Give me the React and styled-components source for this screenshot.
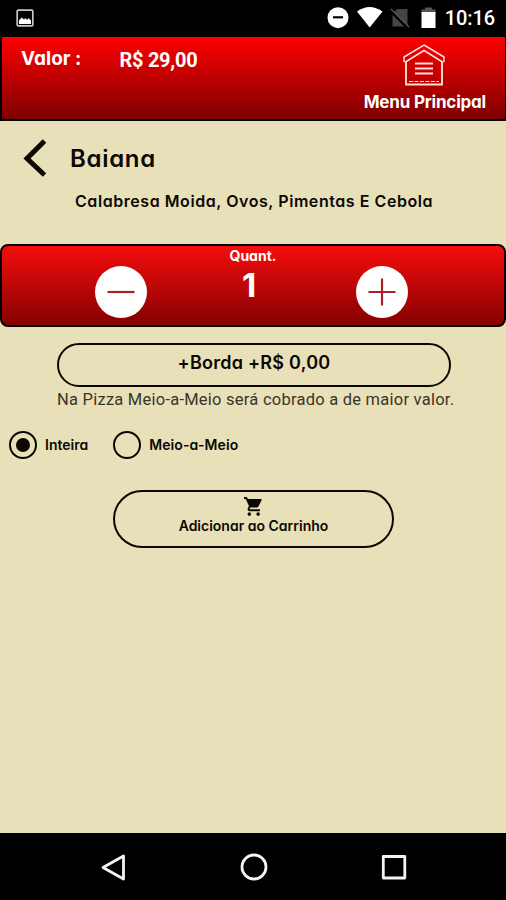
import React, { useState } from "react";
import styled, { createGlobalStyle } from "styled-components";

const GlobalStyle = createGlobalStyle`
  * { box-sizing: border-box; }
  body { margin: 0; background: #000; }
  button { border: 0; padding: 0; margin: 0; background: none; color: inherit; font: inherit; cursor: pointer; }
  svg { display: block; }
`;

const Screen = styled.div`
  display: flex;
  flex-direction: column;
  width: 506px;
  height: 900px;
  overflow: hidden;
  background: #e8e0b9;
  color: #0b0803;
`;

const Label = styled.span`
  display: block;
  white-space: pre;
  font-family: ${(p) => (p.$plain ? "Roboto" : "Inter")}, sans-serif;
  font-feature-settings: ${(p) => (p.$plain ? "normal" : '"cv11" 1')};
  font-size: ${(p) => p.$size}px;
  line-height: ${(p) => p.$line || 20}px;
  font-weight: ${(p) => p.$weight || 600};
  letter-spacing: ${(p) => p.$track || 0}px;
`;

const StatusBar = styled.div`
  display: flex;
  align-items: center;
  flex: 0 0 36px;
  padding: 0 11px 0 16px;
  background: #000;
  color: #fff;
`;

const StatusIcons = styled.div`
  display: flex;
  align-items: center;
  margin-left: auto;
  margin-right: 9px;
`;

const Header = styled.header`
  display: flex;
  justify-content: space-between;
  flex: 0 0 85px;
  padding: 11px 19px 0 19px;
  border: solid #000;
  border-width: 1px 1px 2px 2px;
  background: linear-gradient(#ff0000, #7d0000);
  color: #fff;
`;

const Total = styled.div`
  display: flex;
  gap: 38px;
  padding-top: 1px;
`;

const Amount = styled.div`
  margin-top: -1px;
`;

const MenuButton = styled.button`
  display: flex;
  flex-direction: column;
  align-items: center;
  align-self: flex-start;
  margin-top: -5px;
  gap: 6px;
`;

const TitleRow = styled.div`
  display: flex;
  align-items: center;
  height: 46px;
  margin-top: 14px;
  padding-left: 23px;
  gap: 23px;
`;

const Title = styled.h1`
  margin: 2px 0 0;
`;

const Ingredients = styled.div`
  display: flex;
  height: 63px;
  padding: 10px 0 0 75px;
`;

const QuantityBar = styled.section`
  display: grid;
  grid-template-columns: 1fr 90px 1fr;
  flex: 0 0 83px;
  border: 2.5px solid #090000;
  border-radius: 8px;
  background: linear-gradient(#f50d0d, #860000);
  color: #fff;
`;

const StepCell = styled.div`
  display: flex;
  justify-content: ${(p) => (p.$end ? "flex-start" : "flex-end")};
  padding: ${(p) => (p.$end ? "20px 0 0 58px" : "20px 61px 0 0")};
`;

const RoundButton = styled.button`
  display: flex;
  align-items: center;
  justify-content: center;
  width: 52px;
  height: 52px;
  border-radius: 50%;
  background: #fff;
`;

const Count = styled.div`
  display: flex;
  flex-direction: column;
  align-items: center;
  padding-top: 1px;
`;

const CountValue = styled.div`
  margin-right: 8px;
`;

const PillButton = styled.button`
  display: flex;
  flex-direction: column;
  align-items: center;
  flex: 0 0 ${(p) => p.$height}px;
  width: ${(p) => p.$width}px;
  margin: ${(p) => p.$margin};
  padding-top: ${(p) => p.$top}px;
  border: 2px solid #0b0803;
  border-radius: 30px;
`;

const Note = styled.div`
  padding-left: 57px;
  height: 43px;
  color: #3a3527;
`;

const Options = styled.div`
  display: flex;
  gap: 25px;
  height: 30px;
  padding-left: 9px;
`;

const Option = styled.button`
  display: flex;
  align-items: center;
  gap: 8px;
`;

const Radio = styled.span`
  display: flex;
  align-items: center;
  justify-content: center;
  width: 28px;
  height: 28px;
  border: 2.5px solid #0b0803;
  border-radius: 50%;

  &::after {
    content: "";
    width: 14px;
    height: 14px;
    border-radius: 50%;
    background: ${(p) => (p.$on ? "#0b0803" : "transparent")};
  }
`;

const NavBar = styled.nav`
  display: flex;
  align-items: center;
  justify-content: space-between;
  flex: 0 0 67px;
  margin-top: auto;
  padding: 0 98px 0 99px;
  background: #000;
`;

function PictureIcon() {
  return (
    <svg width="18" height="18" viewBox="0 0 18 18">
      <rect x="1.2" y="1.2" width="15.6" height="15.6" rx="1" fill="none" stroke="#c8c8c8" strokeWidth="1.7" />
      <path d="M3 15V11.500l2.500-3 2.500 2 1.500-1.500 1.500 2 1.500-2L15 11.500V15z" fill="#fff" />
    </svg>
  );
}

function SystemIcons() {
  return (
    <svg width="110" height="24" viewBox="326 6 110 24">
      <circle cx="338" cy="17.7" r="10.5" fill="#fff" />
      <path d="M333 17.3h10" stroke="#000" strokeWidth="2.2" />
      <path d="M357 11.5q12.500-9 25.500 0L369.700 27.500z" fill="#fff" />
      <path d="M392.500 14 397 9h10.500v17.500h-15z" fill="#454545" />
      <path d="M390 10.500l18 18" stroke="#000" strokeWidth="2.500" />
      <path d="M391 9l18 18" stroke="#555" strokeWidth="1.500" />
      <path d="M425 7.500h7v2h3.500v3.500h-14V9.500h3.500z" fill="#555" />
      <path d="M421.500 12h14v16h-14z" fill="#fff" />
    </svg>
  );
}

function HouseIcon() {
  return (
    <svg width="44" height="43" viewBox="1 0 44 43" fill="none" stroke="#ffdcd8" strokeWidth="1.500">
      <path d="M22 2 42 14v4l-1.500 1L22 7.500 3.500 19 2 18v-4z" />
      <path d="M4 18v23.500h36V18" strokeWidth="1.900" />
      <path d="M7 38.500h30" strokeWidth="1" strokeDasharray="4 1.500" />
      <path d="M13 20.500h18M13 25.500h18M13 30.500h18" strokeWidth="1.800" />
    </svg>
  );
}

function StepIcon({ plus }) {
  return (
    <svg width="28" height="28" viewBox="0 0 28 28" stroke="#ad2028" strokeWidth="2.200">
      <path d={plus ? "M.5 14h27M14 .5v27" : "M.5 14h27"} />
    </svg>
  );
}

function CartIcon() {
  return (
    <svg width="19" height="19" viewBox="1 2 21.500 20" preserveAspectRatio="none" fill="#0b0803">
      <path d="M7 18c-1.100 0-1.990.9-1.990 2S5.900 22 7 22s2-.9 2-2-.9-2-2-2zM1 2v2h2l3.600 7.590-1.350 2.450C4.520 15.370 5.480 17 7 17h12v-2H7.420c-.14 0-.25-.11-.25-.25l.03-.12.9-1.630h7.450c.75 0 1.410-.41 1.750-1.030l3.580-6.490A1 1 0 0 0 20.010 4H5.210l-.94-2H1zm16 16c-1.100 0-1.990.9-1.990 2s.89 2 1.990 2 2-.9 2-2-.9-2-2-2z" />
    </svg>
  );
}

function NavIcon({ shape }) {
  return (
    <svg width="28" height="30" viewBox="0 0 28 30" fill="none" stroke="#f4f4f4" strokeWidth="2.800" strokeLinejoin="round">
      {shape === "back" && <path d="M24.500 4v23L4 15.500z" />}
      {shape === "home" && <circle cx="14" cy="15" r="12" />}
      {shape === "recent" && <rect x="3.300" y="4.500" width="21.500" height="21.500" />}
    </svg>
  );
}

export default function App() {
  const [count, setCount] = useState(1);
  const [mode, setMode] = useState("whole");
  return (
    <>
      <GlobalStyle />
      <Screen>
        <StatusBar>
          <PictureIcon />
          <StatusIcons><SystemIcons /></StatusIcons>
          <Label $plain $size={20} $weight={500} $track={-0.1}>10:16</Label>
        </StatusBar>
        <Header>
          <Total>
            <Label $size={19} $weight={700}>Valor :</Label>
            <Amount>
              <Label $plain $size={20} $weight={700} $line={24} $track={-0.25}>R$ 29,00</Label>
            </Amount>
          </Total>
          <MenuButton>
            <HouseIcon />
            <Label $size={17} $weight={700} $track={-0.2}>Menu Principal</Label>
          </MenuButton>
        </Header>
        <TitleRow>
          <button aria-label="Voltar">
            <svg width="24" height="40" viewBox="0 0 24 40" fill="none" stroke="#0b0803" strokeWidth="5">
              <path d="M21.500 3 4 20.500 21.500 37" />
            </svg>
          </button>
          <Title>
            <Label $size={24} $line={28} $track={0.7}>Baiana</Label>
          </Title>
        </TitleRow>
        <Ingredients>
          <Label $size={16} $track={0.56}>Calabresa Moida, Ovos, Pimentas E Cebola</Label>
        </Ingredients>
        <QuantityBar>
          <StepCell>
            <RoundButton aria-label="Diminuir" onClick={() => setCount(Math.max(1, count - 1))}><StepIcon /></RoundButton>
          </StepCell>
          <Count>
            <Label $size={14} $weight={700} $line={18}>Quant.</Label>
            <CountValue>
              <Label $size={33} $weight={700} $line={40}>{count}</Label>
            </CountValue>
          </Count>
          <StepCell $end>
            <RoundButton aria-label="Aumentar" onClick={() => setCount(count + 1)}><StepIcon plus /></RoundButton>
          </StepCell>
        </QuantityBar>
        <PillButton $width={394} $height={44} $margin="16px 0 0 57px" $top={8}>
          <Label $size={18} $track={0.25}>+Borda +R$ 0,00</Label>
        </PillButton>
        <Note>
          <Label $plain $size={16.5} $weight={400} $line={26} $track={0.24}>Na Pizza Meio-a-Meio será cobrado a de maior valor.</Label>
        </Note>
        <Options>
          <Option onClick={() => setMode("whole")}>
            <Radio $on={mode === "whole"} />
            <Label $size={14}>Inteira</Label>
          </Option>
          <Option onClick={() => setMode("half")}>
            <Radio $on={mode === "half"} />
            <Label $size={14} $track={0.1}>Meio-a-Meio</Label>
          </Option>
        </Options>
        <PillButton $width={281} $height={58} $margin="30px 0 0 113px" $top={5}>
          <CartIcon />
          <Label $size={14}>Adicionar ao Carrinho</Label>
        </PillButton>
        <NavBar>
          <NavIcon shape="back" />
          <NavIcon shape="home" />
          <NavIcon shape="recent" />
        </NavBar>
      </Screen>
    </>
  );
}
